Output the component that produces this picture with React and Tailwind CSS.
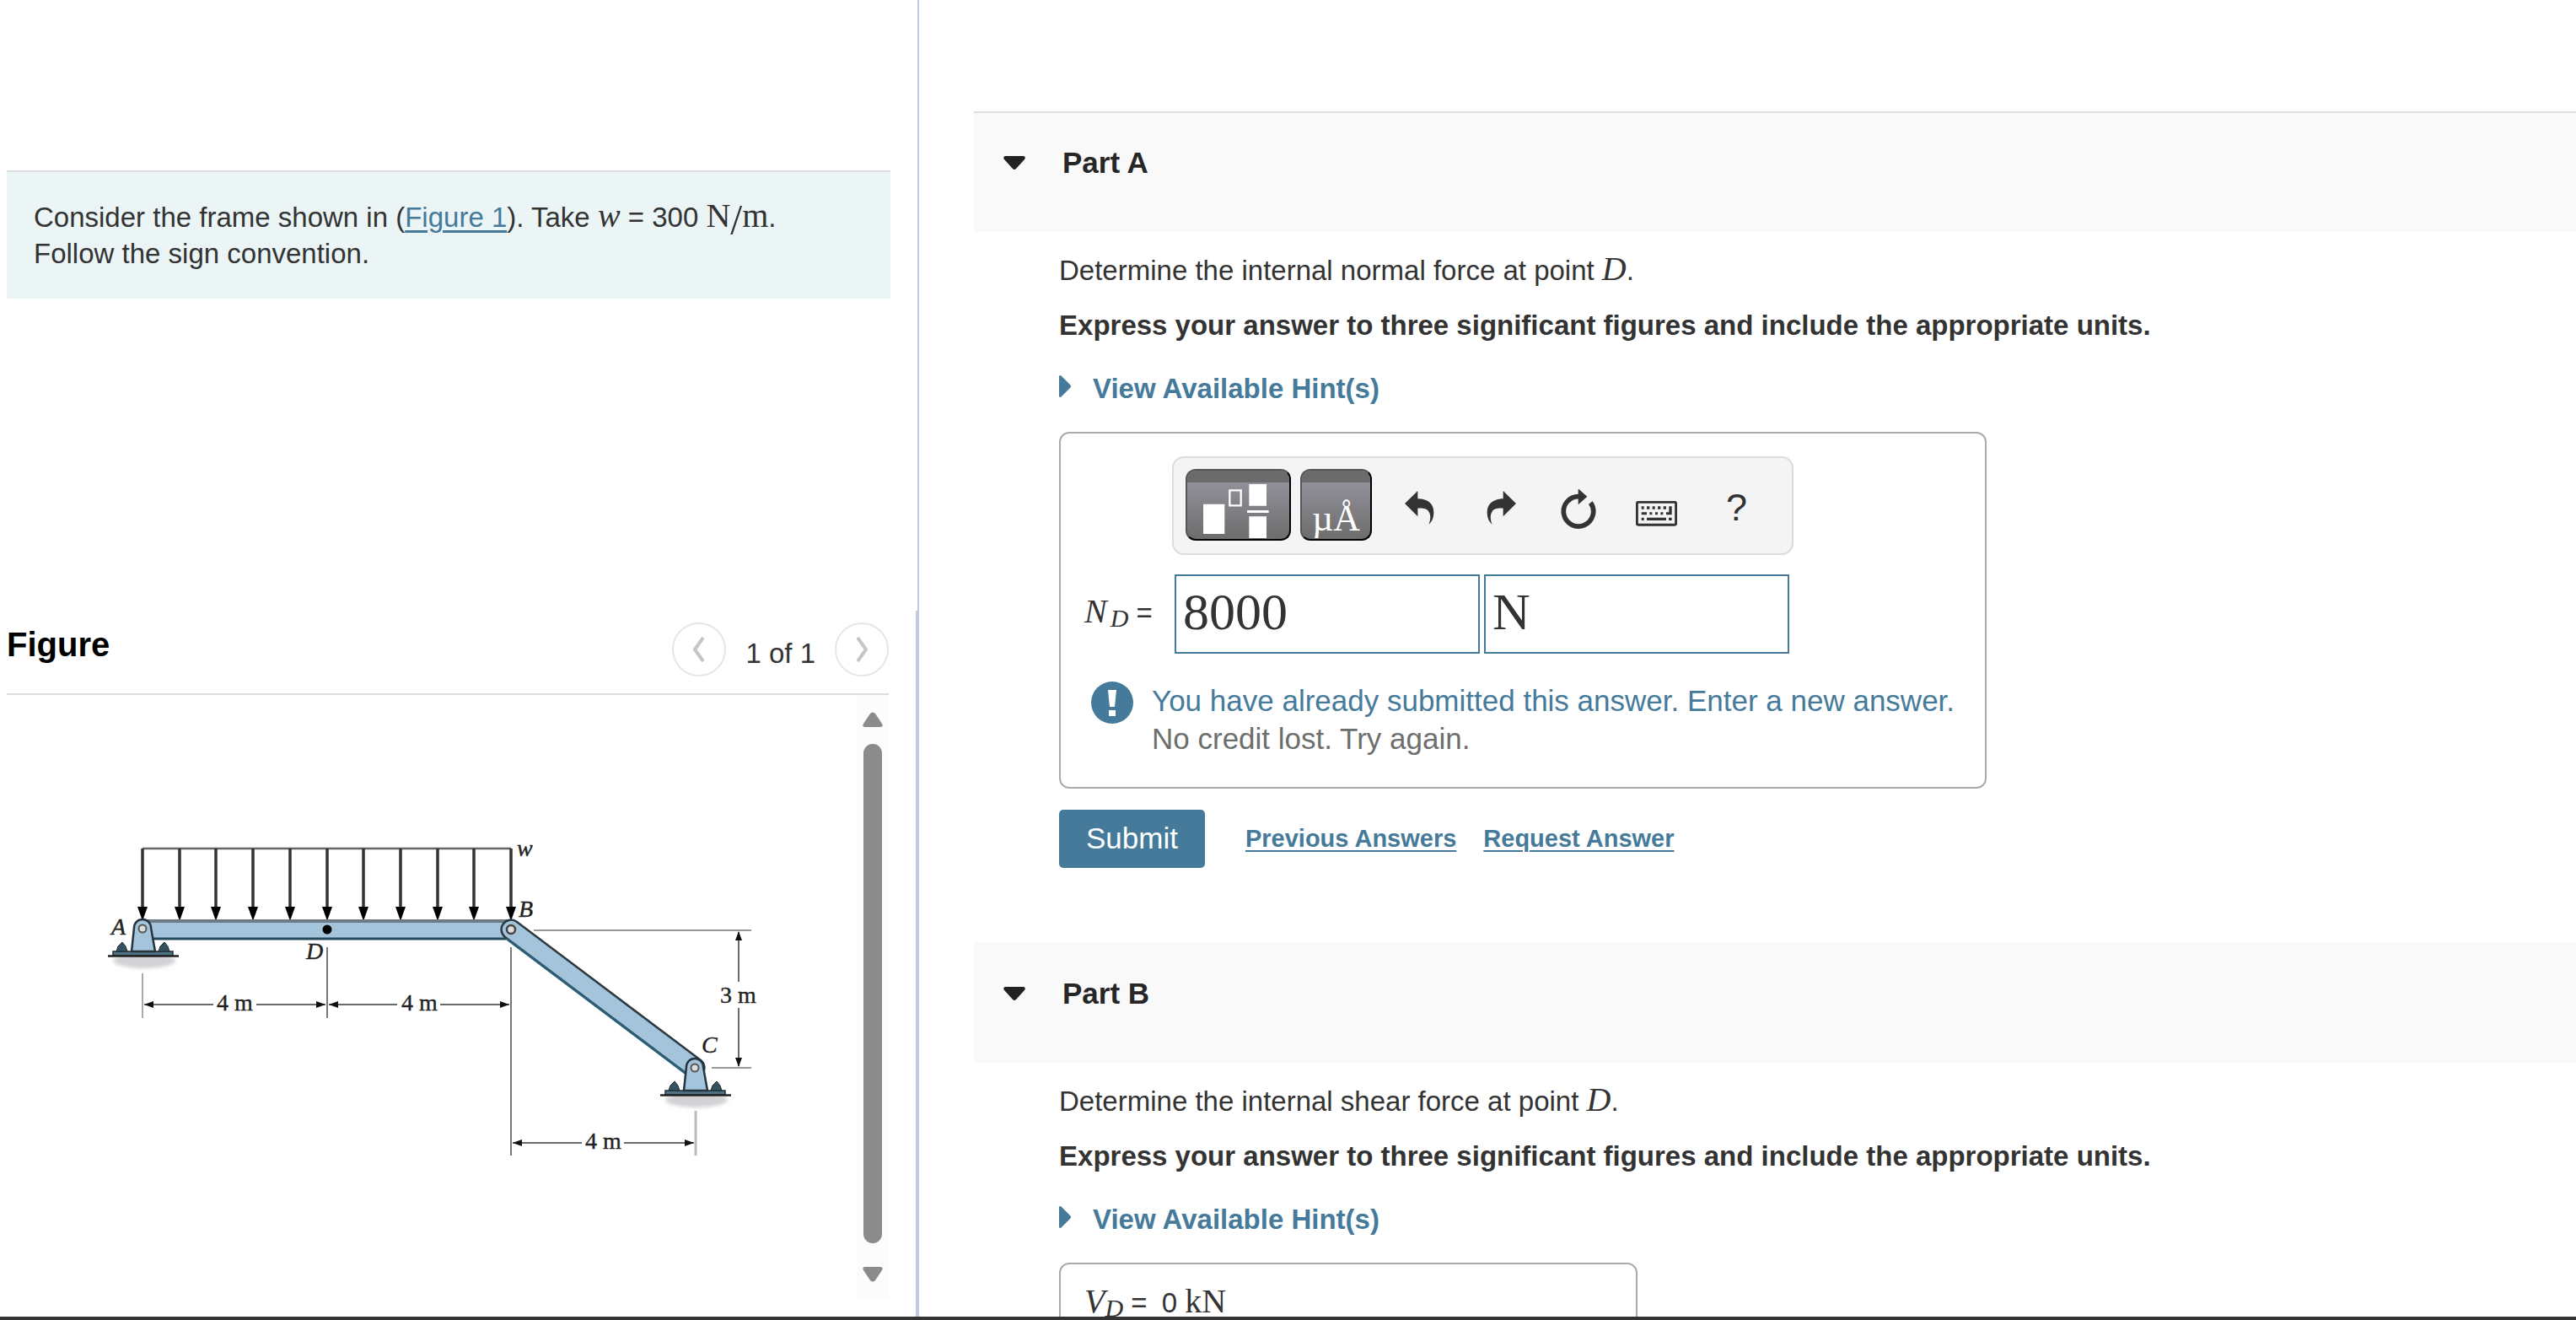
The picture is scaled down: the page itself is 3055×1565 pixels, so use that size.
import React from "react";

const SANS = "font-['Liberation_Sans',Arial,sans-serif]";
const SERIF = "font-['Liberation_Serif','Times_New_Roman',serif]";

function MathText({ italic, children }) {
  return (
    <span className={`${SERIF} text-[40px] leading-none ${italic ? "italic" : ""}`}>{children}</span>
  );
}

function PinSupport({ x, y }) {
  return (
    <g transform={`translate(${x} ${y})`}>
      <ellipse cx="2" cy="38" rx="37" ry="9" fill="#d2d2d5" filter="url(#soft)" />
      <path d="M-35 27H36V32H-35Z" fill="#4f7285" stroke="#1e2f3a" strokeWidth="1.500" />
      <path d="M-41 32.500H43" stroke="#222" strokeWidth="2.500" />
      <path d="M-31 27L-29 21L-24 16L-20 21L-18 27Z" fill="#35525f" stroke="#1c2a31" />
      <path d="M19 27L21 21L26 16L30 21L32 27Z" fill="#35525f" stroke="#1c2a31" />
      <path d="M-13 27L-10 -1A10 10 0 0 1 10 -1L15 27Z" fill="#a4c4dc" stroke="#24353f" strokeWidth="2.500" />
      <circle r="4.500" fill="#ddd" stroke="#555" strokeWidth="2" />
    </g>
  );
}

function Dimension({ x1, x2, y, gap1, gap2 }) {
  return (
    <g stroke="#3a3a3a" fill="#111" strokeWidth="1.500">
      <path d={`M${x1} ${y}H${gap1}M${gap2} ${y}H${x2}`} />
      <path stroke="none" d={`M${x1} ${y}l11 -4v8zM${x2} ${y}l-11 -4v8z`} />
    </g>
  );
}

function FrameFigure() {
  const arrows = [169, 213, 256, 300, 344, 388, 431, 475, 519, 562, 606];
  return (
    <svg viewBox="8 825 1008 715" className="block w-full" role="img" aria-label="Frame with distributed load w">
      <defs>
        <filter id="soft" x="-20%" y="-60%" width="140%" height="220%">
          <feGaussianBlur stdDeviation="2" />
        </filter>
      </defs>
      <path d="M169 1007H606" stroke="#666" strokeWidth="2.500" />
      {arrows.map((x) => (
        <g key={x}>
          <path d={`M${x} 1007V1080`} stroke="#333" strokeWidth="3.500" />
          <path d={`M${x - 6} 1076H${x + 6}L${x} 1093Z`} fill="#000" />
        </g>
      ))}
      <path d="M172 1091H606V1115H172Z" fill="#a4c4dc" />
      <path d="M172 1093H606" stroke="#6d7b84" strokeWidth="4" />
      <path d="M178 1114H600" stroke="#22485c" strokeWidth="3" />
      <path
        d="M613 1094L831 1258A11 11 0 0 1 817 1276L599 1112A11 11 0 0 1 613 1094Z"
        fill="#a4c4dc"
        stroke="#2b3940"
        strokeWidth="2.500"
      />
      <path d="M601 1114L815 1275" stroke="#2a5f77" strokeWidth="3" />
      <circle cx="606" cy="1103" r="5" fill="#ddd" stroke="#444" strokeWidth="2.500" />
      <circle cx="388" cy="1103" r="5.500" fill="#000" />
      <PinSupport x={169} y={1102} />
      <PinSupport x={824} y={1267} />
      <g stroke="#777" strokeWidth="2">
        <path d="M169 1155V1208" stroke="#aaa" />
        <path d="M388 1124V1208" />
        <path d="M606 1124V1371" />
        <path d="M825 1318V1371" stroke="#bbb" strokeWidth="3" />
        <path d="M633 1104H891M844 1267H891" stroke="#999" />
      </g>
      <Dimension x1={171} x2={386} y={1192} gap1={253} gap2={304} />
      <Dimension x1={390} x2={604} y={1192} gap1={471} gap2={522} />
      <Dimension x1={608} x2={823} y={1356} gap1={690} gap2={740} />
      <path d="M876 1106V1165M876 1196V1265" stroke="#3a3a3a" strokeWidth="1.500" />
      <path d="M876 1105l-4 11h8zM876 1266l-4 -11h8z" fill="#111" />
      <g className={SERIF} fontSize="28" fill="#222" stroke="#222" strokeWidth="0.400">
        <text x="257" y="1199">4 m</text>
        <text x="476" y="1199">4 m</text>
        <text x="694" y="1363">4 m</text>
        <text x="854" y="1190">3 m</text>
        <g fontStyle="italic">
          <text x="132" y="1109">A</text>
          <text x="363" y="1138">D</text>
          <text x="615" y="1088">B</text>
          <text x="832" y="1249">C</text>
          <text x="613" y="1016">w</text>
        </g>
      </g>
    </svg>
  );
}

function NavButton({ label, d }) {
  return (
    <button
      type="button"
      aria-label={label}
      className="flex size-16 items-center justify-center rounded-full border-2 border-[#e6e6e6] bg-white"
    >
      <svg viewBox="0 0 20 32" className="h-8 w-5" fill="none" stroke="#c6c6c6" strokeWidth="4">
        <path d={d} />
      </svg>
    </button>
  );
}

function PartHeader({ title, first }) {
  return (
    <h2 className={first ? "border-t-2 border-[#dedede] bg-[#f9f9f9]" : "border-t-2 border-[#f9f9f9] bg-[#f9f9f9]"}>
      <button
        type="button"
        className="flex w-full items-center gap-[44px] pt-9 pr-8 pb-[60px] pl-[35px] text-left text-[35px] leading-[45px] font-bold text-[#262626]"
      >
        <svg viewBox="0 0 26 16" className="h-4 w-[26px]" fill="#222">
          <path d="M2 0H24Q27 1 25 4L15 15Q13 17 11 15L1 4Q-1 1 2 0Z" />
        </svg>
        {title}
      </button>
    </h2>
  );
}

function Question({ kind }) {
  return (
    <div className="text-[33px] leading-[43px] text-[#333]">
      <p>
        Determine the internal {kind} force at point <MathText italic>D</MathText>.
      </p>
      <p className="mt-[22px] font-bold">
        Express your answer to three significant figures and include the appropriate units.
      </p>
      <button type="button" className="mt-8 flex items-start gap-[26px] font-bold text-[#457a9a]">
        <svg viewBox="0 0 14 26" className="mt-1.5 h-[26px] w-[14px]" fill="#457a9a">
          <path d="M0 1Q1 -1 3 1L13 11Q15 13 13 15L3 25Q1 27 0 25Z" />
        </svg>
        View Available Hint(s)
      </button>
    </div>
  );
}

const toolButton =
  "flex h-[85px] overflow-hidden rounded-[12px] border-2 border-t-[#555] border-r-black border-b-black border-l-[#555] bg-linear-to-b from-[#9a98a3] to-[#6d6d6d]";

function Toolbar() {
  return (
    <div className="flex h-[117px] w-[737px] items-start rounded-[14px] border-2 border-[#dcdcdc] bg-[#f4f4f4] px-[14px] py-[13px] text-[#333]">
      <button type="button" aria-label="Templates" className={`${toolButton} w-[125px] flex-col`}>
        <span className="h-[14px] w-full shrink-0 bg-[#6b6b6b]" />
        <svg viewBox="84 126 363 201" className="h-[67px] w-[121px]" fill="#fff">
          <path d="M141 203H217V309H141ZM304 132H366V209H304ZM297 225H374V234H297ZM304 247H366V324H304Z" />
          <path d="M235 154H275V208H235Z" fill="none" stroke="#fff" strokeWidth="7" />
        </svg>
      </button>
      <button type="button" aria-label="Units" className={`${toolButton} ml-[11px] w-[85px] flex-col items-center`}>
        <span className="h-[14px] w-full shrink-0 bg-[#6b6b6b]" />
        <span className={`${SERIF} pt-5 text-[44px] leading-[46px] text-white`}>µÅ</span>
      </button>
      <button type="button" aria-label="Undo" className="mt-[26px] ml-[39px]">
        <svg viewBox="858 157 105 120" className="h-10 w-[35px]" fill="currentColor">
          <path d="M858 202L904 157V185C942 185 961 205 961 233C961 252 955 267 943 277C950 260 951 244 944 232C938 221 925 218 904 219V248Z" />
        </svg>
      </button>
      <button type="button" aria-label="Redo" className="mt-[26px] ml-[62px]">
        <svg viewBox="-963 157 105 120" className="h-10 w-[35px]" fill="currentColor">
          <path
            transform="scale(-1 1)"
            d="M858 202L904 157V185C942 185 961 205 961 233C961 252 955 267 943 277C950 260 951 244 944 232C938 221 925 218 904 219V248Z"
          />
        </svg>
      </button>
      <button type="button" aria-label="Reset" className="mt-6 ml-[53px]">
        <svg viewBox="244 149 126 141" className="h-[47px] w-[42px]" fill="currentColor">
          <path d="M350 197A53 53 0 1 1 309 175" fill="none" stroke="currentColor" strokeWidth="17" />
          <path d="M306 147L338 175L306 204Z" />
        </svg>
      </button>
      <button type="button" aria-label="Keyboard shortcuts" className="mt-[38px] ml-[47px]">
        <svg viewBox="514 193 147 90" className="h-[30px] w-[49px]" fill="currentColor">
          <rect x="518" y="197" width="139" height="81" rx="6" fill="none" stroke="currentColor" strokeWidth="9" />
          <path d="M534 212h9v10h-9zM553 212h10v10h-10zM573 212h9v10h-9zM592 212h10v10h-10zM612 212h10v10h-10zM632 212h10v30h-20v-9h10zM534 233h19v9h-19zM563 233h9v9h-9zM583 233h9v9h-9zM602 233h9v9h-9zM534 252h9v10h-9zM553 252h69v10h-69zM631 252h11v10h-11z" />
        </svg>
      </button>
      <button type="button" aria-label="Help" className="mt-[18px] ml-[58px] text-[45px] leading-[56px]">
        ?
      </button>
    </div>
  );
}

function PartA() {
  const field = `${SERIF} h-[94px] w-[362px] border-2 border-[#457a9a] bg-white px-2 pb-1.5 text-[62px] text-[#333] outline-none`;
  return (
    <section>
      <PartHeader title="Part A" first />
      <div className="pt-6 pl-[101px]">
        <Question kind="normal" />
        <div className="mt-[30px] w-fit rounded-[12px] border-2 border-[#aaa] pt-[27px] pr-9 pb-[35px] pl-7">
          <div className="pl-[104px]">
            <Toolbar />
          </div>
          <div className="mt-[23px] flex items-center">
            <label htmlFor="nd-value" className="w-[107px] pb-1 text-[33px] leading-[43px] whitespace-nowrap text-[#333]">
              <MathText italic>
                N<sub className="bottom-[-5px] pl-1 text-[30px]">D</sub>
              </MathText>{" "}
              =
            </label>
            <input id="nd-value" className={field} defaultValue="8000" />
            <input aria-label="Units" className={`${field} ml-[5px]`} defaultValue="N" />
          </div>
          <div className="mt-[33px] flex gap-[22px] pl-2 text-[35px] leading-[45px]">
            <svg viewBox="0 0 50 50" className="size-[50px]">
              <circle cx="25" cy="25" r="25" fill="#457a9a" />
              <path d="M20 10H30L28 30H22ZM21 34H29V41H21Z" fill="#fff" />
            </svg>
            <div>
              <p className="text-[#457a9a]">You have already submitted this answer. Enter a new answer.</p>
              <p className="text-[#6c6f6c]">No credit lost. Try again.</p>
            </div>
          </div>
        </div>
        <div className="mt-[25px] flex items-center text-[29px] font-bold text-[#457a9a]">
          <button type="button" className="h-[69px] rounded-[5px] bg-[#457a9a] px-8 text-[35px] font-normal text-white">
            Submit
          </button>
          <a href="#previous" className="ml-12 underline decoration-2 underline-offset-4">Previous Answers</a>
          <a href="#request" className="ml-[32px] underline decoration-2 underline-offset-4">Request Answer</a>
        </div>
      </div>
    </section>
  );
}

function PartB() {
  return (
    <section className="mt-[88px]">
      <PartHeader title="Part B" />
      <div className="pt-6 pl-[101px]">
        <Question kind="shear" />
        <div className="mt-[30px] h-[120px] w-[686px] rounded-[12px] border-2 border-[#aaa] pt-6 pl-7 text-[33px] leading-[43px] text-[#333]">
          <MathText italic>
            V<sub className="bottom-[-5px] text-[30px]">D</sub>
          </MathText>{" "}
          = <span className="pl-2">0</span> <MathText>kN</MathText>
        </div>
      </div>
    </section>
  );
}

export default function App() {
  return (
    <div className={`${SANS} flex h-screen flex-col overflow-hidden bg-white`}>
      <div className="flex min-h-0 flex-1">
        <aside className="flex w-[35.68%] shrink-0 flex-col">
          <div className="h-[724px] shrink-0 border-r-2 border-[#bfcbdd] pt-[202px] pr-8 pl-2">
            <div className="border-t-2 border-[#dedede] bg-[#ebf5f6] px-8 py-8 text-[33px] leading-[43px] text-[#333]">
              Consider the frame shown in (
              <a href="#figure" className="text-[#457a9a] underline decoration-[3px] underline-offset-4">Figure 1</a>
              ). Take <MathText italic>w</MathText> = 300{" "}
              <MathText>
                N<span className="align-middle text-[50px] leading-[0px]">/</span>m
              </MathText>
              .<br />
              Follow the sign convention.
            </div>
          </div>
          <div id="figure" className="flex min-h-0 flex-1 flex-col border-r-4 border-[#bfcbdd] pr-8 pb-[21px] pl-2">
            <div className="flex items-center border-b-2 border-[#dedede] pt-[14px] pb-5">
              <h1 className="flex-1 pb-3 text-[40px] leading-[47px] font-bold text-black">Figure</h1>
              <NavButton label="Previous figure" d="M15 2L5 16L15 30" />
              <span className="px-[23px] pt-2 text-[33px] leading-[43px] text-[#333]">1 of 1</span>
              <NavButton label="Next figure" d="M5 2L15 16L5 30" />
            </div>
            <div className="flex min-h-0 flex-1">
              <div className="min-w-0 flex-1 overflow-hidden">
                <FrameFigure />
              </div>
              <div className="flex w-[38px] flex-col items-center bg-[#fcfcfc] py-5">
                <svg viewBox="0 0 24 18" className="h-[18px] w-6" fill="#8b8b8b">
                  <path d="M9 2Q12 -1 15 2L23 14Q25 18 21 18H3Q-1 18 1 14Z" />
                </svg>
                <div className="my-5 w-[22px] flex-1 rounded-full bg-[#8b8b8b]" />
                <svg viewBox="0 0 24 18" className="mt-2 h-[18px] w-6" fill="#8b8b8b">
                  <path d="M9 16Q12 19 15 16L23 4Q25 0 21 0H3Q-1 0 1 4Z" />
                </svg>
              </div>
            </div>
          </div>
        </aside>
        <main className="min-w-0 flex-1 overflow-hidden pt-[132px] pl-[65px]">
          <PartA />
          <PartB />
        </main>
      </div>
      <div className="h-1 shrink-0 bg-[#333]" />
    </div>
  );
}
